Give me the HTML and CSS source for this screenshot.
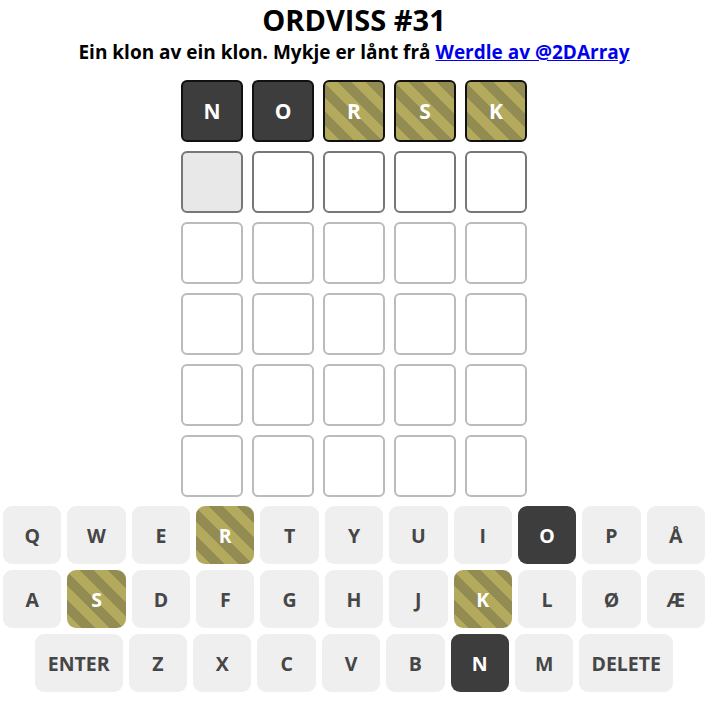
FILE: index.html
```html
<!DOCTYPE html>
<html lang="nn">
<head>
<meta charset="utf-8">
<title>Ordviss</title>
<link rel="stylesheet" href="styles.css">
</head>
<body>
<header class="header">
  <h1 class="title">ORDVISS #31</h1>
  <p class="subtitle">Ein klon av ein klon. Mykje er lånt frå <a class="link" href="#">Werdle av @2DArray</a></p>
</header>
<main class="board">
  <div class="row">
    <div class="tile absent">N</div>
    <div class="tile absent">O</div>
    <div class="tile present">R</div>
    <div class="tile present">S</div>
    <div class="tile present">K</div>
  </div>
  <div class="row">
    <div class="tile current active"></div>
    <div class="tile current"></div>
    <div class="tile current"></div>
    <div class="tile current"></div>
    <div class="tile current"></div>
  </div>
  <div class="row">
    <div class="tile"></div><div class="tile"></div><div class="tile"></div><div class="tile"></div><div class="tile"></div>
  </div>
  <div class="row">
    <div class="tile"></div><div class="tile"></div><div class="tile"></div><div class="tile"></div><div class="tile"></div>
  </div>
  <div class="row">
    <div class="tile"></div><div class="tile"></div><div class="tile"></div><div class="tile"></div><div class="tile"></div>
  </div>
  <div class="row">
    <div class="tile"></div><div class="tile"></div><div class="tile"></div><div class="tile"></div><div class="tile"></div>
  </div>
</main>
<section class="keyboard">
  <div class="krow">
    <div class="key">Q</div>
    <div class="key">W</div>
    <div class="key">E</div>
    <div class="key kpresent">R</div>
    <div class="key">T</div>
    <div class="key">Y</div>
    <div class="key">U</div>
    <div class="key">I</div>
    <div class="key kabsent">O</div>
    <div class="key">P</div>
    <div class="key">Å</div>
  </div>
  <div class="krow">
    <div class="key">A</div>
    <div class="key kpresent">S</div>
    <div class="key">D</div>
    <div class="key">F</div>
    <div class="key">G</div>
    <div class="key">H</div>
    <div class="key">J</div>
    <div class="key kpresent">K</div>
    <div class="key">L</div>
    <div class="key">Ø</div>
    <div class="key">Æ</div>
  </div>
  <div class="krow krow3">
    <div class="key wide enter">ENTER</div>
    <div class="key fixed">Z</div>
    <div class="key fixed">X</div>
    <div class="key fixed">C</div>
    <div class="key fixed">V</div>
    <div class="key fixed">B</div>
    <div class="key fixed kabsent">N</div>
    <div class="key fixed">M</div>
    <div class="key wide delete">DELETE</div>
  </div>
</section>
</body>
</html>
```

FILE: styles.css
```css
html, body {
  margin: 0;
  padding: 0;
  background: #ffffff;
}
body {
  font-family: "Open Sans", "DejaVu Sans", sans-serif;
  font-weight: 700;
  color: #000;
  width: 708px;
}
.header {
  text-align: center;
}
.title {
  margin: 0;
  font-size: 29px;
  line-height: normal;
  font-weight: 700;
}
.subtitle {
  margin: 0;
  font-size: 19px;
  line-height: 26px;
  font-weight: 700;
}
.link {
  color: #0000ee;
  text-decoration: underline;
}
.board {
  margin: 15px auto 0;
  width: 346px;
  display: flex;
  flex-direction: column;
  gap: 9px;
}
.row {
  display: flex;
  gap: 9px;
}
.tile {
  box-sizing: border-box;
  width: 62px;
  height: 62px;
  border: 2px solid #bbbbbb;
  border-radius: 6px;
  display: flex;
  align-items: center;
  justify-content: center;
  font-size: 21px;
  color: #fff;
  background: #fff;
}
.tile.current {
  border-color: #777777;
}
.tile.active {
  background: #e8e8e8;
}
.tile.absent {
  background: #3d3d3d;
  border-color: #111;
}
.tile.present {
  border-color: #111;
  background: repeating-linear-gradient(45deg, #b3aa5e 0 10px, #928c52 10px 20px);
}
.keyboard {
  margin-top: 9px;
  display: flex;
  flex-direction: column;
  gap: 6px;
}
.krow {
  display: flex;
}
.krow3 {
  justify-content: center;
}
.key {
  flex: 1;
  margin: 0 3px;
  height: 58px;
  border-radius: 9px;
  background: #efefef;
  color: #464646;
  display: flex;
  align-items: center;
  justify-content: center;
  font-size: 19.5px;
}
.key.fixed {
  flex: 0 0 calc(708px / 11 - 6px);
}
.key.enter {
  flex: 0 0 88px;
}
.key.delete {
  flex: 0 0 94px;
}
.key.kabsent {
  background: #3d3d3d;
  color: #fff;
}
.key.kpresent {
  background: repeating-linear-gradient(45deg, #b3aa5e 0 10px, #928c52 10px 20px);
  color: #fff;
}
```
